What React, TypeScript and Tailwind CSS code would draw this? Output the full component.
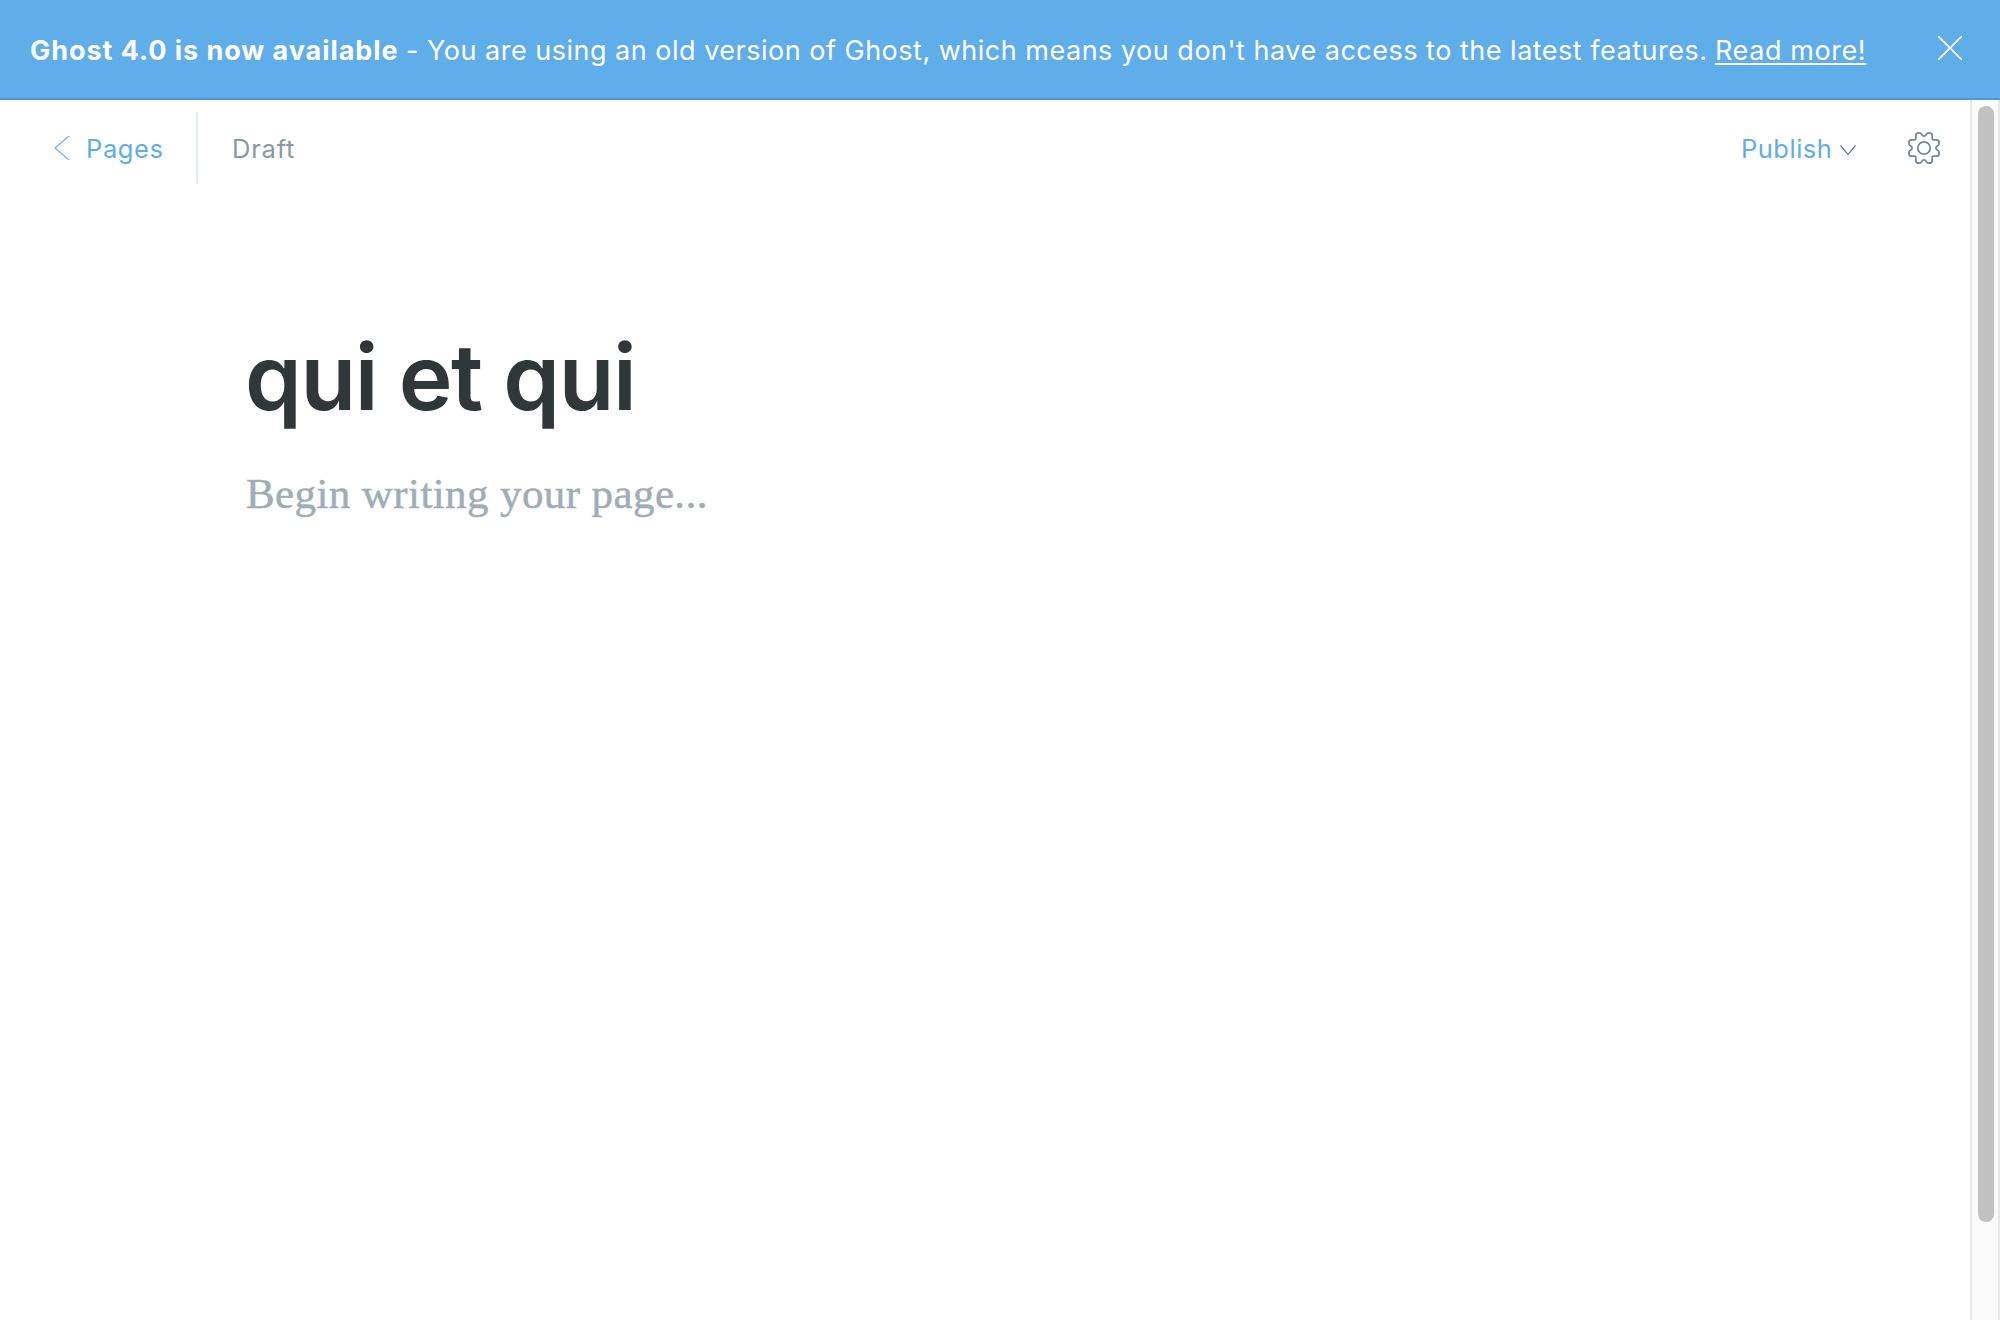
import React from "react";

const QUARTER =
  "M0 -11.9C2 -11.9 2.1 -13.6 2.9 -14.4C3.5 -15 4.3 -15.1 5.4 -15.1C7.4 -15.1 8.2 -14.2 8.2 -12.4V-9.4Q8.2 -8.2 9.4 -8.2H12.4C14.2 -8.2 15.1 -7.4 15.1 -5.4C15.1 -4.3 15 -3.5 14.4 -2.9C13.6 -2.1 11.9 -2 11.9 0";

function GearIcon() {
  return (
    <svg className="block size-8" viewBox="-16 -16 32 32" fill="none" stroke="#738a94" strokeWidth="1.8">
      {[0, 90, 180, 270].map((angle) => (
        <path key={angle} d={QUARTER} transform={`rotate(${angle})`} />
      ))}
      <circle r="6.2" />
    </svg>
  );
}

function Banner() {
  return (
    <header className="flex h-[100px] items-center justify-between border-b-2 border-[#4a99e0] bg-[#5fade9] pr-[38px] pl-[30px] text-[27px] text-white">
      <p className="flex items-baseline whitespace-pre pt-[3px] leading-10">
        <strong className="w-[376px] font-bold tracking-[0.95px]">Ghost 4.0 is now available</strong>
        <span className="w-[1309px] font-normal tracking-[0.5px]">- You are using an old version of Ghost, which means you don't have access to the latest features.</span>
        <a href="#" className="font-normal tracking-[0.58px] underline decoration-2 underline-offset-[3px]">Read more!</a>
      </p>
      <button aria-label="Close" className="-mt-[2px]">
        <svg className="block size-6" viewBox="0 0 24 24" fill="none" stroke="white" strokeWidth="1.7" strokeLinecap="round">
          <path d="M.6 .6 23.4 23.4M23.4 .6 .6 23.4" />
        </svg>
      </button>
    </header>
  );
}

function Toolbar() {
  return (
    <nav className="flex h-24 items-center justify-between pr-[30px] pl-[54px] text-[25.5px]">
      <div className="flex items-center">
        <a href="#" className="flex items-center text-[#5fade9]">
          <svg className="block h-6 w-4" viewBox="0 0 16 24" fill="none" stroke="currentColor" strokeWidth="1.1">
            <path d="M15 0 1 12 15 24" />
          </svg>
          <span className="ml-4 w-[110px] pt-[2px] tracking-[0.6px]">Pages</span>
        </a>
        <div className="h-[72px] w-[2px] bg-[#e5eff5]" />
        <span className="ml-[34px] pt-[2px] tracking-[0.8px] text-[#8699a4]">Draft</span>
      </div>
      <div className="flex items-center">
        <button className="flex items-center text-[#5fade9]">
          <span className="w-[99px] pt-[2px] text-left tracking-[0.5px]">Publish</span>
          <svg className="mt-1 block h-[10px] w-4" viewBox="0 0 16 10" fill="none" stroke="#557c9b" strokeWidth="1.2">
            <path d="M.4 .4 8 9.4 15.6 .4" />
          </svg>
        </button>
        <button aria-label="Settings" className="ml-[52px]">
          <GearIcon />
        </button>
      </div>
    </nav>
  );
}

export default function App() {
  return (
    <div className="flex h-[1320px] w-[2000px] flex-col overflow-hidden bg-white font-[Inter,sans-serif]">
      <Banner />
      <div className="flex min-h-0 flex-1">
        <main className="flex-1">
          <Toolbar />
          <article className="pt-[125px] pl-[245px]">
            <h1 className="text-[91px] leading-[112px] font-semibold tracking-[-1.4px] text-[#303739]">qui et qui</h1>
            <p className="mt-[31px] pl-px font-['Liberation_Serif',serif] text-[43px] leading-[60px] tracking-[0.4px] text-[#9eaeb8] [-webkit-text-stroke:0.5px_#9eaeb8]">Begin writing your page...</p>
          </article>
        </main>
        <aside className="w-[30px] border-r-2 border-l-2 border-[#e8e8e8] bg-[#fafafa] pt-[6px] pl-[6px]">
          <div className="h-[1116px] w-4 rounded-full bg-[#c1c1c1]" />
        </aside>
      </div>
    </div>
  );
}
